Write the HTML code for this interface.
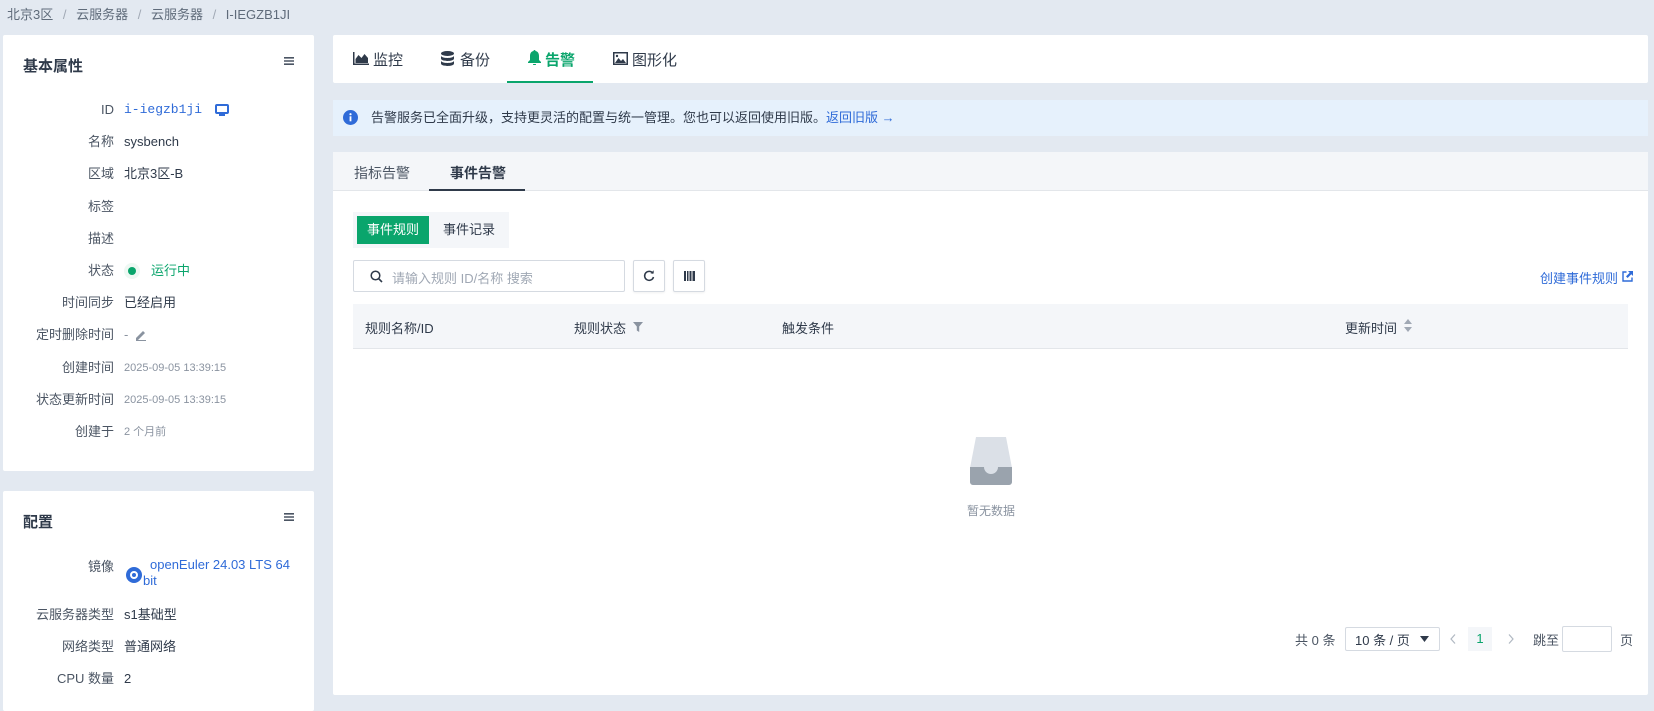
<!DOCTYPE html>
<html><head><meta charset="utf-8"><style>
*{box-sizing:border-box;margin:0;padding:0}
body{width:1654px;height:696px;background:#e3e9f1;font-family:"Liberation Sans","Noto Sans CJK SC",sans-serif;font-size:13px;color:#2f3a4a;position:relative;overflow:hidden}
.a{position:absolute;white-space:nowrap}
.card{position:absolute;background:#fff;border-radius:2px}
.lbl{position:absolute;left:0;width:114px;text-align:right;color:#4b5563}
.row{position:absolute;left:0;width:310px;height:20px;line-height:20px}
.val{position:absolute;left:124px}
.small{font-size:11px;color:#8a93a0}
</style></head><body>
<div class="a" style="left:7px;top:6px;color:#5f6b7a;font-size:13px;line-height:18px">北京3区 <span style="color:#a0a8b4;margin:0 6px">/</span> 云服务器 <span style="color:#a0a8b4;margin:0 6px">/</span> 云服务器 <span style="color:#a0a8b4;margin:0 6px">/</span> I-IEGZB1JI</div>

<div class="card" style="left:3px;top:35px;width:311px;height:436px">
 <div class="a" style="left:20px;top:20px;font-size:15px;font-weight:bold;color:#2f3a4a">基本属性</div>
 <svg class="a" style="left:281px;top:22px" width="10" height="8" viewBox="0 0 10 8"><path d="M0 0h10v1.6H0zM0 3.2h10v1.6H0zM0 6.4h10V8H0z" fill="#4b5563"/></svg>
</div>
<div class="a" style="left:0;top:0;width:320px">
 <div class="row" style="top:100px"><span class="lbl">ID</span><span class="val" style="color:#2f6bd8;font-family:'Liberation Mono',monospace;font-size:13px">i-iegzb1ji</span>
  <svg class="a" style="left:215px;top:4px" width="14" height="12" viewBox="0 0 14 12"><rect x="1" y="1" width="12" height="8" rx="1" fill="none" stroke="#2f6bd8" stroke-width="2"/><rect x="4" y="10" width="6" height="2" fill="#2f6bd8"/></svg></div>
 <div class="row" style="top:132px"><span class="lbl">名称</span><span class="val">sysbench</span></div>
 <div class="row" style="top:164px"><span class="lbl">区域</span><span class="val">北京3区-B</span></div>
 <div class="row" style="top:197px"><span class="lbl">标签</span></div>
 <div class="row" style="top:229px"><span class="lbl">描述</span></div>
 <div class="row" style="top:261px"><span class="lbl">状态</span><span class="a" style="left:128px;top:6px;width:8px;height:8px;border-radius:50%;background:#0aa56c;box-shadow:0 0 0 4px #eef8f3"></span><span class="val" style="left:151px;color:#0aa56c">运行中</span></div>
 <div class="row" style="top:293px"><span class="lbl">时间同步</span><span class="val">已经启用</span></div>
 <div class="row" style="top:325px"><span class="lbl">定时删除时间</span><span class="val" style="color:#8a93a0">-</span>
  <svg class="a" style="left:135px;top:4px" width="12" height="12" viewBox="0 0 12 12"><path d="M1 11h2l7-7-2-2-7 7z" fill="#8a93a0"/><rect x="1" y="11" width="10" height="1" fill="#8a93a0"/></svg></div>
 <div class="row" style="top:358px"><span class="lbl">创建时间</span><span class="val small">2025-09-05 13:39:15</span></div>
 <div class="row" style="top:390px"><span class="lbl">状态更新时间</span><span class="val small">2025-09-05 13:39:15</span></div>
 <div class="row" style="top:422px"><span class="lbl">创建于</span><span class="val small">2 个月前</span></div>
</div>

<div class="card" style="left:3px;top:491px;width:311px;height:220px">
 <div class="a" style="left:20px;top:20px;font-size:15px;font-weight:bold">配置</div>
 <svg class="a" style="left:281px;top:22px" width="10" height="8" viewBox="0 0 10 8"><path d="M0 0h10v1.6H0zM0 3.2h10v1.6H0zM0 6.4h10V8H0z" fill="#4b5563"/></svg>
</div>
<div class="a" style="left:0;top:0;width:320px">
 <div class="row" style="top:557px"><span class="lbl">镜像</span>
  <span class="a" style="left:126px;top:10px;width:16px;height:16px;border-radius:50%;background:#2f6bd8"></span><span class="a" style="left:130px;top:14px;width:8px;height:8px;border-radius:50%;border:2px solid #fff"></span>
  <span class="a" style="left:150px;top:0;color:#2f6bd8;line-height:16px">openEuler 24.03 LTS 64</span><span class="a" style="left:143px;top:16px;color:#2f6bd8;line-height:16px">bit</span></div>
 <div class="row" style="top:605px"><span class="lbl">云服务器类型</span><span class="val">s1基础型</span></div>
 <div class="row" style="top:637px"><span class="lbl">网络类型</span><span class="val">普通网络</span></div>
 <div class="row" style="top:669px"><span class="lbl">CPU 数量</span><span class="val">2</span></div>
</div>

<div class="card" style="left:333px;top:35px;width:1315px;height:48px">
 <svg class="a" style="left:20px;top:17px" width="16" height="13" viewBox="0 0 16 13"><path d="M0 0v13h16v-1.5H1.5V0z M2.5 11V7l3-4 3 3 3-4 3.5 4v5z" fill="#2f3a4a"/></svg>
 <div class="a" style="left:40px;top:14px;font-size:15px">监控</div>
 <svg class="a" style="left:108px;top:16px" width="13" height="15" viewBox="0 0 13 15"><ellipse cx="6.5" cy="2.5" rx="6.5" ry="2.5" fill="#2f3a4a"/><path d="M0 4.5c0 3.3 13 3.3 13 0v3c0 3.3-13 3.3-13 0z M0 9.5c0 3.3 13 3.3 13 0v3c0 3.3-13 3.3-13 0z" fill="#2f3a4a"/></svg>
 <div class="a" style="left:127px;top:14px;font-size:15px">备份</div>
 <svg class="a" style="left:195px;top:15px" width="13" height="15" viewBox="0 0 13 15"><path d="M6.5 0c-.8 0-1 .6-1 1C3 1.6 2 3.5 2 6v4L0 12v1h13v-1l-2-2V6c0-2.5-1-4.4-3.5-5 0-.4-.2-1-1-1z M5 14h3a1.5 1.5 0 0 1-3 0z" fill="#0aa56c"/></svg>
 <div class="a" style="left:212px;top:14px;font-size:15px;color:#0aa56c;font-weight:bold">告警</div>
 <div class="a" style="left:174px;top:46px;width:86px;height:2px;background:#0aa56c"></div>
 <svg class="a" style="left:280px;top:17px" width="15" height="13" viewBox="0 0 15 13"><rect x=".75" y=".75" width="13.5" height="11.5" fill="none" stroke="#2f3a4a" stroke-width="1.5"/><path d="M2 11l3.5-5 2.5 3 2-2 3 4z" fill="#2f3a4a"/><circle cx="4" cy="4" r="1.2" fill="#2f3a4a"/></svg>
 <div class="a" style="left:299px;top:14px;font-size:15px">图形化</div>
</div>

<div class="a" style="left:333px;top:100px;width:1315px;height:36px;background:#e6f1fc"></div>
<svg class="a" style="left:343px;top:110px" width="15" height="15" viewBox="0 0 15 15"><circle cx="7.5" cy="7.5" r="7.5" fill="#2f6bd8"/><rect x="6.6" y="6.3" width="1.8" height="5" fill="#fff"/><circle cx="7.5" cy="4.2" r="1.1" fill="#fff"/></svg>
<div class="a" style="left:371px;top:110px;font-size:13px;line-height:16px">告警服务已全面升级，支持更灵活的配置与统一管理。您也可以返回使用旧版。<span style="color:#2f6bd8">返回旧版 →</span></div>

<div class="card" style="left:333px;top:152px;width:1315px;height:543px">
 <div class="a" style="left:0;top:0;width:1315px;height:39px;background:#f4f6f9;border-bottom:1px solid #e3e6ea"></div>
 <div class="a" style="left:21px;top:11px;font-size:14px;color:#4b5563">指标告警</div>
 <div class="a" style="left:117px;top:11px;font-size:14px;font-weight:bold;color:#2f3a4a">事件告警</div>
 <div class="a" style="left:96px;top:37px;width:96px;height:2px;background:#2f3a4a"></div>

 <div class="a" style="left:20px;top:60px;width:156px;height:36px;background:#f4f6f9"></div>
 <div class="a" style="left:24px;top:64px;width:72px;height:28px;background:#0aa56c;color:#fff;text-align:center;line-height:28px">事件规则</div>
 <div class="a" style="left:96px;top:64px;width:80px;height:28px;text-align:center;line-height:28px;color:#2f3a4a">事件记录</div>

 <div class="a" style="left:20px;top:108px;width:272px;height:32px;border:1px solid #d5dae1;border-radius:2px"></div>
 <svg class="a" style="left:37px;top:118px" width="13" height="13" viewBox="0 0 13 13"><circle cx="5.5" cy="5.5" r="4.3" fill="none" stroke="#2f3a4a" stroke-width="1.5"/><path d="M8.6 8.6L12 12" stroke="#2f3a4a" stroke-width="1.6"/></svg>
 <div class="a" style="left:59px;top:116px;color:#a0a8b4">请输入规则 ID/名称 搜索</div>
 <div class="a" style="left:300px;top:108px;width:32px;height:32px;border:1px solid #d5dae1;border-radius:2px;box-shadow:0 1px 2px rgba(0,0,0,.06)"></div>
 <svg class="a" style="left:310px;top:118px" width="12" height="12" viewBox="0 0 12 12"><path d="M10 3.5A4.5 4.5 0 1 0 10.5 7" fill="none" stroke="#2f3a4a" stroke-width="1.5"/><path d="M7.5 3.5h3.2V.3z" fill="#2f3a4a"/></svg>
 <div class="a" style="left:340px;top:108px;width:32px;height:32px;border:1px solid #d5dae1;border-radius:2px;box-shadow:0 1px 2px rgba(0,0,0,.06)"></div>
 <svg class="a" style="left:351px;top:119px" width="11" height="10" viewBox="0 0 11 10"><path d="M0 0h2v10H0zM3 0h1.5v10H3zM5.5 0h2v10h-2zM8.5 0H11v10H8.5z" fill="#2f3a4a"/></svg>
 <div class="a" style="left:1207px;top:116px;color:#2f6bd8">创建事件规则</div>
 <svg class="a" style="left:1289px;top:119px" width="11" height="11" viewBox="0 0 11 11"><path d="M4.5 1H1v9h9V6.5" fill="none" stroke="#2f6bd8" stroke-width="1.4"/><path d="M6 0h5v5L9.3 3.3 5.6 7 4 5.4l3.7-3.7z" fill="#2f6bd8"/></svg>

 <div class="a" style="left:20px;top:152px;width:1275px;height:45px;background:#f4f6f9;border-bottom:1px solid #e3e6ea"></div>
 <div class="a" style="left:32px;top:166px;color:#2f3a4a">规则名称/ID</div>
 <div class="a" style="left:241px;top:166px;color:#2f3a4a">规则状态</div>
 <svg class="a" style="left:300px;top:170px" width="10" height="10" viewBox="0 0 10 10"><path d="M0 0h10L6.2 4.5V10L3.8 8.5V4.5z" fill="#8a93a0"/></svg>
 <div class="a" style="left:449px;top:166px;color:#2f3a4a">触发条件</div>
 <div class="a" style="left:1012px;top:166px;color:#2f3a4a">更新时间</div>
 <svg class="a" style="left:1071px;top:167px" width="8" height="13" viewBox="0 0 8 13"><path d="M4 0L8 5H0z M4 13L0 8h8z" fill="#a0a8b4"/></svg>

 <svg class="a" style="left:637px;top:285px" width="42" height="48" viewBox="0 0 42 48"><path d="M6 0h30l6 31v14a3 3 0 0 1-3 3H3a3 3 0 0 1-3-3V31z" fill="#dbe0e7"/><path d="M0 30h14a7 7 0 0 0 14 0h14v15a3 3 0 0 1-3 3H3a3 3 0 0 1-3-3z" fill="#9aa3ad"/></svg>
 <div class="a" style="left:632px;top:350px;width:52px;text-align:center;color:#8a93a0;font-size:12px">暂无数据</div>

 <div class="a" style="left:962px;top:478px;color:#4b5563">共 0 条</div>
 <div class="a" style="left:1012px;top:475px;width:95px;height:24px;border:1px solid #d5dae1;border-radius:2px"></div>
 <div class="a" style="left:1022px;top:478px;color:#2f3a4a">10 条 / 页</div>
 <svg class="a" style="left:1087px;top:484px" width="9" height="6" viewBox="0 0 9 6"><path d="M0 0h9L4.5 6z" fill="#2f3a4a"/></svg>
 <svg class="a" style="left:1117px;top:482px" width="6" height="10" viewBox="0 0 6 10"><path d="M5 0.5L1 5l4 4.5" fill="none" stroke="#b0b8c2" stroke-width="1.2"/></svg>
 <div class="a" style="left:1135px;top:475px;width:24px;height:24px;background:#f4f6f9;color:#0aa56c;text-align:center;line-height:24px">1</div>
 <svg class="a" style="left:1175px;top:482px" width="6" height="10" viewBox="0 0 6 10"><path d="M1 0.5L5 5l-4 4.5" fill="none" stroke="#b0b8c2" stroke-width="1.2"/></svg>
 <div class="a" style="left:1200px;top:478px;color:#4b5563">跳至</div>
 <div class="a" style="left:1229px;top:474px;width:50px;height:26px;border:1px solid #d5dae1;border-radius:2px"></div>
 <div class="a" style="left:1287px;top:478px;color:#4b5563">页</div>
</div>
</body></html>
